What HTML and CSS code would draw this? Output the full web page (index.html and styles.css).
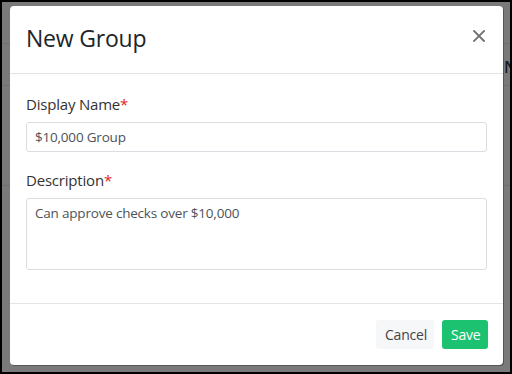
FILE: index.html
```html
<!DOCTYPE html>
<html lang="en">
<head>
<meta charset="utf-8">
<title>New Group</title>
<link rel="stylesheet" href="styles.css">
</head>
<body>
<div class="screen">
  <span class="behind-text">N</span>
  <div class="modal">
    <div class="modal-header">
      <h5 class="modal-title">New Group</h5>
      <button class="close" type="button" aria-label="Close">
        <svg width="12" height="12" viewBox="0 0 12 12"><path d="M1 1L11 11M11 1L1 11" stroke="#707070" stroke-width="1.8" stroke-linecap="square"/></svg>
      </button>
    </div>
    <div class="modal-body">
      <div class="form-group">
        <label class="form-label">Display Name<span class="req">*</span></label>
        <div class="form-control">$10,000 Group</div>
      </div>
      <div class="form-group">
        <label class="form-label">Description<span class="req">*</span></label>
        <div class="form-control textarea">Can approve checks over $10,000</div>
      </div>
    </div>
    <div class="modal-footer">
      <button class="btn btn-light" type="button">Cancel</button>
      <button class="btn btn-success" type="button">Save</button>
    </div>
  </div>
</div>
</body>
</html>
```
FILE: styles.css
```css
* { box-sizing: border-box; }
html, body { margin: 0; padding: 0; }
body {
  width: 512px;
  height: 374px;
  font-family: "Open Sans", "Noto Sans", sans-serif;
  color: #212529;
}
.screen {
  position: relative;
  width: 512px;
  height: 374px;
  border: 2px solid #000;
  background-color: #7a7a7a;
  background-image:
    linear-gradient(#6f6f6f, #6f6f6f),
    linear-gradient(#6f6f6f, #6f6f6f),
    linear-gradient(#6f6f6f, #6f6f6f);
  background-repeat: no-repeat;
  background-size: 100% 1px, 100% 1px, 100% 1px;
  background-position: 0 41px, 0 83px, 0 183px;
  padding: 4px 7px 7px 8px;
  overflow: hidden;
}
.behind-text {
  position: absolute;
  left: 502px;
  top: 54px;
  width: 8px;
  overflow: hidden;
  font-size: 16px;
  font-weight: 600;
  color: #14202c;
}
.modal {
  position: relative;
  height: 100%;
  background: #fff;
  border-radius: 4px;
  box-shadow: 1px 1px 0 #555;
  display: flex;
  flex-direction: column;
}
.modal-header {
  display: flex;
  align-items: center;
  justify-content: space-between;
  height: 68px;
  padding: 0 16px;
  border-bottom: 1px solid #e4e4e4;
}
.modal-title {
  margin: 0;
  font-size: 23px;
  font-weight: 400;
  letter-spacing: -0.2px;
  color: #212529;
  padding-bottom: 3px;
}
.close {
  border: 0;
  background: none;
  padding: 0;
  margin-right: 2px;
  margin-top: -8px;
  width: 12px;
  height: 12px;
  display: flex;
}
.modal-body {
  padding: 18px 16px 0 16px;
  flex: 1;
}
.form-group { margin-bottom: 16px; }
.form-label {
  display: block;
  font-size: 15px;
  line-height: 24px;
  color: #333;
  margin-bottom: 6px;
  letter-spacing: -0.2px;
}
.req { color: #e02424; }
.form-control {
  height: 30px;
  border: 1px solid #dcdde2;
  border-radius: 3px;
  padding: 3px 8px;
  font-size: 13.5px;
  line-height: 22px;
  color: #4d5257;
  letter-spacing: -0.2px;
}
.form-control.textarea {
  height: 72px;
  padding-top: 3px;
}
.modal-footer {
  display: flex;
  justify-content: flex-end;
  gap: 8px;
  padding: 16px 15px 16px 16px;
  border-top: 1px solid #e4e4e4;
}
.btn {
  font-family: inherit;
  height: 29px;
  border: 0;
  border-radius: 3px;
  font-size: 14px;
  padding: 0 9px;
  letter-spacing: -0.2px;
}
.btn-light {
  background: #f6f7f8;
  color: #444;
  width: 58px;
}
.btn-success {
  background: #1cc270;
  color: #fff;
  width: 46px;
}
```
